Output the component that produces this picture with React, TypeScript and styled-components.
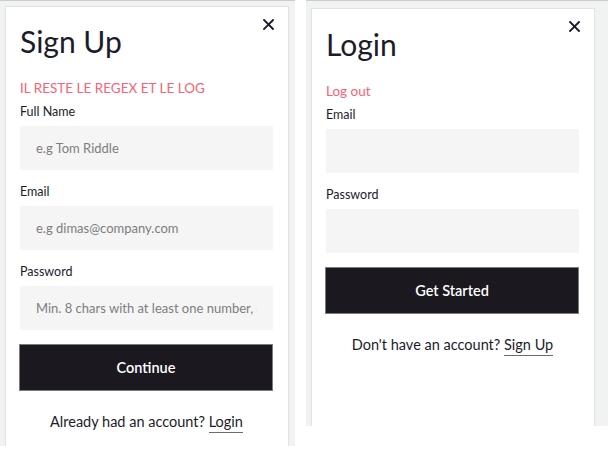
import React from 'react'
import styled, { createGlobalStyle } from 'styled-components'

const COLORS = {
  panel: '#f1f2f2',
  panelLine: '#cdcdcd',
  cardBorder: '#e1e2e2',
  text: '#1d1b2b',
  accent: '#fd6173',
  field: '#f5f5f5',
  placeholder: '#7d7d7d',
  button: '#1b1820',
  buttonBorder: '#7c7c80',
  white: '#ffffff',
}

const GlobalStyle = createGlobalStyle`
  html, body {
    margin: 0;
    padding: 0;
    background: ${COLORS.white};
    font-family: Lato, "Open Sans", sans-serif;
    color: ${COLORS.text};
  }
`

type FieldProps = {
  label: string
  placeholder?: string
  type?: string
}

const Field: React.FC<FieldProps> = ({ label, placeholder, type = 'text' }) => (
  <FieldWrapper>
    <Label>{label}</Label>
    <Input type={type} placeholder={placeholder} />
  </FieldWrapper>
)

const CloseIcon = () => (
  <svg width='11' height='11' viewBox='0 0 11 11'>
    <path
      d='M1 1 L10 10 M10 1 L1 10'
      stroke={COLORS.text}
      strokeWidth='1.9'
      strokeLinecap='square'
    />
  </svg>
)

type AuthCardProps = {
  title: string
  notice: string
  children: React.ReactNode
  action: string
  question: string
  link: string
  padTop: number
}

const AuthCard: React.FC<AuthCardProps> = ({
  title,
  notice,
  children,
  action,
  question,
  link,
  padTop,
}) => (
  <Card padTop={padTop}>
    <CloseButton aria-label='close'>
      <CloseIcon />
    </CloseButton>
    <Title>{title}</Title>
    <Notice>{notice}</Notice>
    {children}
    <SubmitButton>{action}</SubmitButton>
    <Footer>
      {question} <FooterLink>{link}</FooterLink>
    </Footer>
  </Card>
)

export default function App() {
  return (
    <>
      <GlobalStyle />
      <Page>
        <Panel height={446} offset={5} trailing={6}>
          <AuthCard
            title='Sign Up'
            notice='IL RESTE LE REGEX ET LE LOG'
            action='Continue'
            question='Already had an account?'
            link='Login'
            padTop={14}
          >
            <Field label='Full Name' placeholder='e.g Tom Riddle' />
            <Field label='Email' placeholder='e.g dimas@company.com' />
            <Field
              label='Password'
              type='password'
              placeholder='Min. 8 chars with at least one number, one letter'
            />
          </AuthCard>
        </Panel>
        <Panel height={426} offset={7} trailing={12}>
          <AuthCard
            title='Login'
            notice='Log out'
            action='Get Started'
            question="Don't have an account?"
            link='Sign Up'
            padTop={15}
          >
            <Field label='Email' />
            <Field label='Password' type='password' />
          </AuthCard>
        </Panel>
      </Page>
    </>
  )
}

const Page = styled.div`
  display: flex;
  align-items: flex-start;
  gap: 11px;
  width: 608px;
`

const Panel = styled.div<{ height: number; offset: number; trailing: number }>`
  box-sizing: border-box;
  display: flex;
  height: ${(p) => p.height}px;
  padding: ${(p) => p.offset}px ${(p) => p.trailing}px 0 5px;
  background: ${COLORS.panel};
  border-top: 1px solid ${COLORS.panelLine};
  flex: 0 0 auto;
  &:last-child {
    flex: 1 1 auto;
  }
`

const Card = styled.div<{ padTop: number }>`
  position: relative;
  box-sizing: border-box;
  width: 284px;
  padding: ${(p) => p.padTop}px 15px 0 14px;
  background: ${COLORS.white};
  border: 1px solid ${COLORS.cardBorder};
  border-bottom: none;
  display: flex;
  flex-direction: column;
`

const CloseButton = styled.button`
  position: absolute;
  top: 12px;
  right: 14px;
  padding: 0;
  border: none;
  background: none;
  display: flex;
  cursor: pointer;
`

const Title = styled.h1`
  margin: 0;
  font-size: 30px;
  line-height: 40px;
  font-weight: 400;
  color: ${COLORS.text};
`

const Notice = styled.p`
  margin: 17px 0 5px;
  font-size: 13.5px;
  line-height: 20px;
  color: ${COLORS.accent};
`

const FieldWrapper = styled.div`
  display: flex;
  flex-direction: column;
  margin-bottom: 13px;
`

const Label = styled.label`
  font-size: 12.5px;
  line-height: 18px;
  margin-bottom: 5px;
  color: ${COLORS.text};
`

const Input = styled.input`
  box-sizing: border-box;
  width: 100%;
  height: 44px;
  padding: 0 16px;
  border: none;
  outline: none;
  background: ${COLORS.field};
  font-family: inherit;
  font-size: 13px;
  color: ${COLORS.text};
  &::placeholder {
    color: ${COLORS.placeholder};
  }
`

const SubmitButton = styled.button`
  box-sizing: border-box;
  width: calc(100% + 1px);
  margin-left: -1px;
  height: 47px;
  margin-top: 1px;
  border: 1px solid ${COLORS.buttonBorder};
  background: ${COLORS.button};
  color: ${COLORS.white};
  font-family: inherit;
  font-size: 14.5px;
  font-weight: 600;
  cursor: pointer;
`

const Footer = styled.p`
  margin: 21px 0 0;
  text-align: center;
  font-size: 14.5px;
  line-height: 20px;
  color: ${COLORS.text};
`

const FooterLink = styled.a`
  color: ${COLORS.text};
  text-decoration: none;
  padding-bottom: 2px;
  border-bottom: 1px solid #6b6b6b;
  cursor: pointer;
`
